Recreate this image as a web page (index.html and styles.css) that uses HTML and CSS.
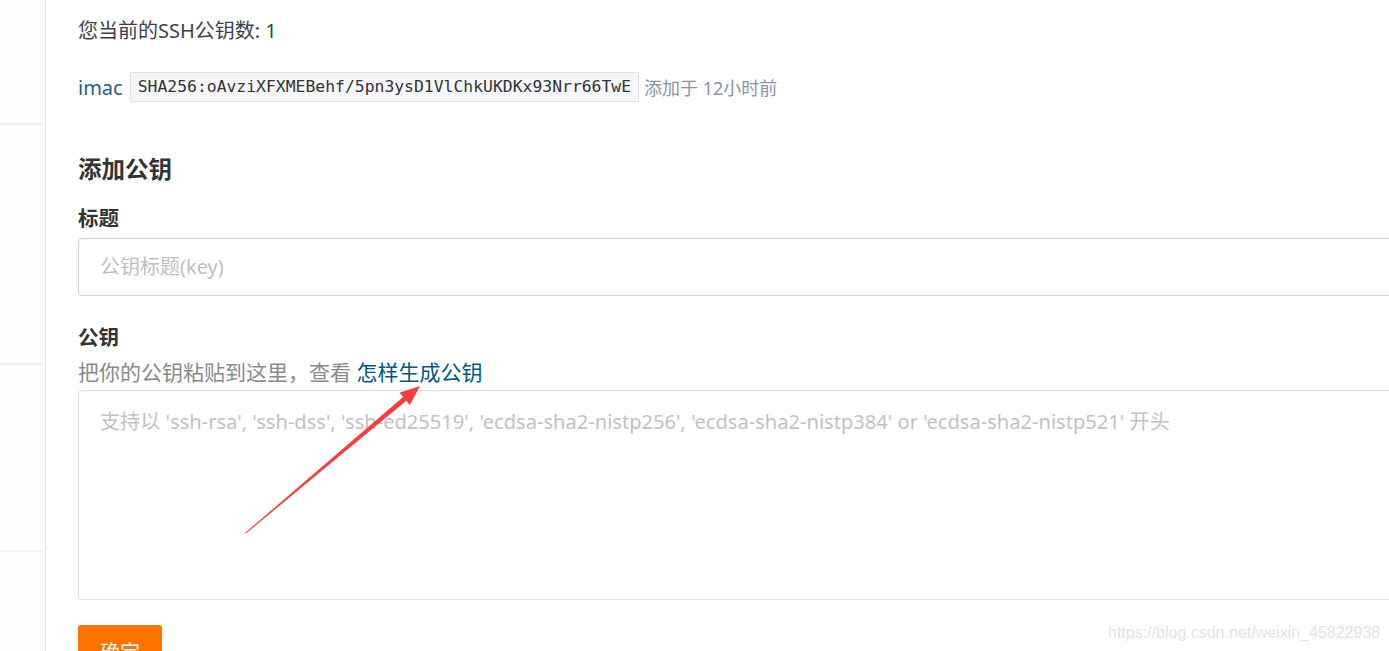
FILE: index.html
```html
<!DOCTYPE html>
<html lang="zh-CN">
<head>
<meta charset="utf-8">
<title>SSH公钥</title>
<link rel="stylesheet" href="styles.css">
</head>
<body>
<div class="page">
  <aside class="sidebar">
    <div class="side-block side-block-1"></div>
    <div class="side-block side-block-2"></div>
    <div class="side-block side-block-3"></div>
    <div class="side-block side-block-4"></div>
  </aside>
  <main class="main">
    <p class="count">您当前的SSH公钥数: 1</p>
    <div class="key-row">
      <span class="key-name">imac</span>
      <code class="fingerprint">SHA256:oAvziXFXMEBehf/5pn3ysD1VlChkUKDKx93Nrr66TwE</code>
      <span class="key-time">添加于 12小时前</span>
    </div>
    <h2 class="section-title">添加公钥</h2>
    <div class="field-label">标题</div>
    <div class="input">公钥标题(key)</div>
    <div class="field-label field-label-key">公钥</div>
    <p class="hint">把你的公钥粘贴到这里，查看 <a class="link" href="#">怎样生成公钥</a></p>
    <div class="textarea">支持以 'ssh-rsa', 'ssh-dss', 'ssh-ed25519', 'ecdsa-sha2-nistp256', 'ecdsa-sha2-nistp384' or 'ecdsa-sha2-nistp521' 开头</div>
    <button class="submit">确定</button>
  </main>
  <svg class="arrow" width="1389" height="651" viewBox="0 0 1389 651">
    <polygon points="245,533 403.1,397.0 399.6,392.8 420,386 409.8,405.0 406.3,400.8 245.8,533.6" fill="#f53d3d"/>
  </svg>
  <div class="watermark">https://blog.csdn.net/weixin_45822938</div>
</div>
</body>
</html>
```

FILE: styles.css
```css
html, body {
  margin: 0;
  padding: 0;
  background: #ffffff;
  overflow: hidden;
}

body {
  font-family: "Noto Sans", "Noto Sans CJK SC", sans-serif;
  color: #3b3f4c;
}

.page {
  position: relative;
  display: flex;
  width: 1389px;
  height: 651px;
  overflow: hidden;
}

.sidebar {
  flex: 0 0 45px;
  border-right: 1px solid #e4e4e7;
  background: #fefefe;
  display: flex;
  flex-direction: column;
}

.side-block {
  width: 43px;
  border-bottom: 2px solid #f2f2f2;
}
.side-block-1 { height: 123px; }
.side-block-2 { height: 238px; }
.side-block-3 { height: 185px; }
.side-block-4 { border-bottom: none; flex: 1; }

.main {
  flex: 0 0 1370px;
  padding: 16px 0 0 32px;
  box-sizing: border-box;
}

.count {
  margin: 0;
  font-size: 20px;
  line-height: 30px;
  color: #3b3f4c;
}

.key-row {
  margin-top: 26px;
  display: flex;
  align-items: center;
  height: 30px;
}

.key-name {
  font-size: 20px;
  color: #1f5f80;
  margin-right: 7px;
}

.fingerprint {
  font-family: "DejaVu Sans Mono", "Liberation Mono", monospace;
  font-size: 16.4px;
  line-height: 28px;
  padding: 0 7px;
  background: #f5f6f9;
  border: 1px solid #e1e2e8;
  color: #333333;
  margin-right: 5px;
}

.key-time {
  font-size: 18px;
  color: #8c92a4;
}

.section-title {
  margin: 51px 0 0 0;
  font-size: 23.5px;
  line-height: 32px;
  font-weight: 700;
  color: #333333;
}

.field-label {
  margin-top: 19px;
  font-size: 20.5px;
  line-height: 28px;
  font-weight: 700;
  color: #333333;
}

.field-label-key {
  margin-top: 27px;
}

.input {
  margin-top: 6px;
  height: 56px;
  border: 1px solid #cfd1dc;
  border-radius: 4px;
  padding: 0 21px;
  font-size: 20px;
  line-height: 56px;
  color: #c0c0c0;
}

.hint {
  margin: 7px 0 0 0;
  font-size: 21px;
  line-height: 28px;
  color: #8a8a8a;
}

.link {
  color: #005980;
  text-decoration: none;
}

.textarea {
  margin-top: 4px;
  border: 1px solid #dcdde3;
  border-radius: 4px;
  padding: 16px 21px 0 21px;
  box-sizing: border-box;
  height: 210px;
  font-size: 20.1px;
  line-height: 30px;
  color: #c2c2c2;
}

.submit {
  margin-top: 25px;
  width: 84px;
  height: 54px;
  border: none;
  border-radius: 3px;
  background: #fe7300;
  color: #ffffff;
  font-family: "Noto Sans CJK SC", sans-serif;
  font-size: 20px;
  line-height: 54px;
  padding: 0;
}

.arrow {
  position: absolute;
  left: 0;
  top: 0;
  pointer-events: none;
}

.watermark {
  position: absolute;
  left: 1108px;
  top: 623px;
  font-family: "Liberation Sans", Arial, sans-serif;
  font-size: 16px;
  line-height: 20px;
  color: #e3e3e3;
}
```
